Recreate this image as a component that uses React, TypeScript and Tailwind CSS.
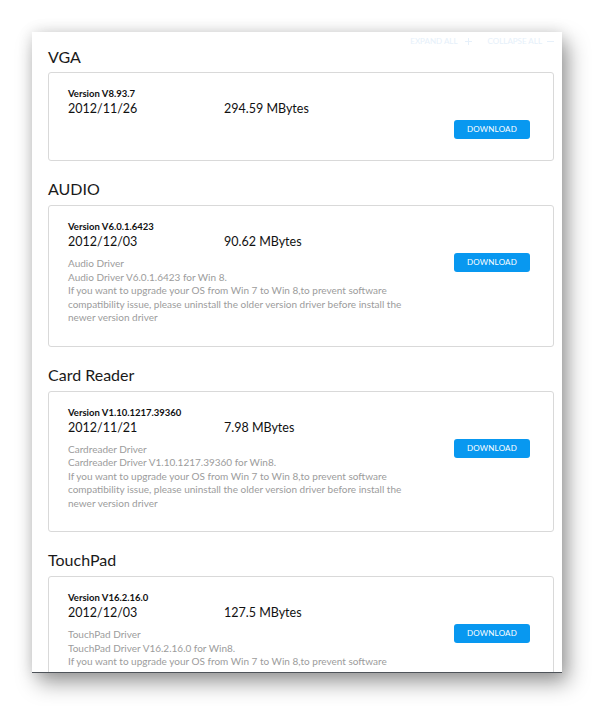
const NOTE_LINES = [
  "If you want to upgrade your OS from Win 7 to Win 8,to prevent software",
  "compatibility issue, please uninstall the older version driver before install the",
  "newer version driver",
];

type Driver = {
  title: string;
  version: string;
  date: string;
  size: string;
  desc: string[];
};

const drivers: Driver[] = [
  { title: "VGA", version: "Version V8.93.7", date: "2012/11/26", size: "294.59 MBytes", desc: [] },
  {
    title: "AUDIO",
    version: "Version V6.0.1.6423",
    date: "2012/12/03",
    size: "90.62 MBytes",
    desc: ["Audio Driver", "Audio Driver V6.0.1.6423 for Win 8.", ...NOTE_LINES],
  },
  {
    title: "Card Reader",
    version: "Version V1.10.1217.39360",
    date: "2012/11/21",
    size: "7.98 MBytes",
    desc: ["Cardreader Driver", "Cardreader Driver V1.10.1217.39360 for Win8.", ...NOTE_LINES],
  },
  {
    title: "TouchPad",
    version: "Version V16.2.16.0",
    date: "2012/12/03",
    size: "127.5 MBytes",
    desc: ["TouchPad Driver", "TouchPad Driver V16.2.16.0 for Win8.", ...NOTE_LINES],
  },
];

const DriverCard = ({ driver, first }: { driver: Driver; first: boolean }) => (
  <section className={first ? "" : "mt-[17px]"}>
    <h2 className={`text-[16px] leading-[22px] text-[#1a1a1a] ${first ? "mb-[4px]" : "mb-[5px]"}`}>
      {driver.title}
    </h2>
    <div className="border border-[#d9d9d9] rounded-[3px] pl-[19px] pr-[23px] pt-[14px] pb-[21px] flex justify-between">
      <div className="flex-1">
        <div className="text-[9.5px] leading-[13px] font-bold text-[#111]">{driver.version}</div>
        <div className="flex text-[12.5px] leading-[17px] text-[#111]">
          <span className="w-[156px]">{driver.date}</span>
          <span>{driver.size}</span>
        </div>
        {driver.desc.length > 0 && (
          <div className="mt-[7px] text-[10px] leading-[13.5px] text-[#9c9c9c]">
            {driver.desc.map((line, i) => (
              <div key={`${driver.title}-line-${i}`} className="whitespace-nowrap">
                {line}
              </div>
            ))}
          </div>
        )}
      </div>
      <button className="mt-[33px] w-[76px] h-[19px] shrink-0 rounded-[3px] bg-[#0898f0] text-white text-[8px] tracking-[0.2px] leading-[19px]">
        DOWNLOAD
      </button>
    </div>
  </section>
);

export default function App() {
  return (
    <div className="w-[594px] h-[706px] bg-white pt-[32px] pl-[32px] font-['Lato',sans-serif]">
      <div className="w-[530px] h-[641px] bg-white overflow-hidden border-b border-[#4e5359] pl-[16px] pr-[8px] pt-[3px] shadow-[0_0_14px_rgba(0,0,0,0.12),6px_10px_20px_rgba(0,0,0,0.38)]">
        <div className="h-[12px] flex justify-end items-center gap-[16px] text-[8px] text-[#e6f0fa]">
          <span className="flex items-center gap-[7px]">
            EXPAND ALL
            <svg width="7" height="7" viewBox="0 0 7 7" stroke="#e6f0fa" strokeWidth="1">
              <path d="M3.5 0v7M0 3.5h7" />
            </svg>
          </span>
          <span className="flex items-center gap-[5px]">
            COLLAPSE ALL
            <svg width="7" height="7" viewBox="0 0 7 7" stroke="#e6f0fa" strokeWidth="1">
              <path d="M0 3.5h7" />
            </svg>
          </span>
        </div>
        <div className="-mt-[1px]">
          {drivers.map((d, i) => (
            <DriverCard key={d.title} driver={d} first={i === 0} />
          ))}
        </div>
      </div>
    </div>
  );
}
